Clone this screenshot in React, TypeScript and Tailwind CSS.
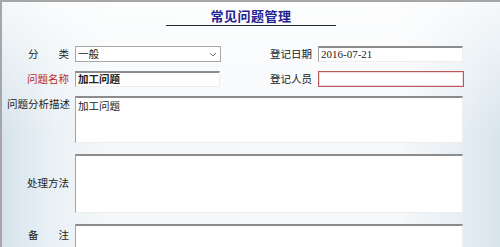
import React from "react";

const cjk = "font-['SimSun','Noto_Sans_CJK_SC',sans-serif]";
const sunken =
  "bg-white border-t-2 border-t-[#8c8c8c] border-l border-l-[#a4a4a4] border-r border-r-[#ededed] border-b border-b-[#ededed]";

function Spread({ a, b, className = "" }: { a: string; b: string; className?: string }) {
  return (
    <div className={`flex w-[41px] justify-between ${className}`}>
      <span>{a}</span>
      <span>{b}</span>
    </div>
  );
}

export default function App() {
  return (
    <div
      className={`relative h-[247px] w-[500px] overflow-hidden border-l-2 border-t-2 border-[#a6a6a6] text-[10.5px] leading-none text-[#222] ${cjk} bg-[linear-gradient(to_bottom,rgba(255,255,255,0.75),rgba(255,255,255,0)_55%),linear-gradient(to_right,#d6e3ec_0%,#e9f0f5_10%,#f5f8fa_22%,#f6f8fa_80%,#e6eef4_92%,#d8e4ec_100%)]`}
    >
      {/* title */}
      <div className="flex flex-col items-center pt-[7px]">
        <div className="text-[13px] font-bold leading-[14px] tracking-[0.5px] text-[#1f2290]">常见问题管理</div>
        <div className="mt-[2px] h-px w-[170px] bg-[#2a2a2a]" />
      </div>

      {/* rows */}
      <div className="mt-[20px] flex items-center">
        <div className="flex w-[73px] justify-end pr-[6px]">
          <Spread a="分" b="类" />
        </div>
        <div className="flex h-[16px] w-[146px] items-center justify-between border border-[#a8a8a8] bg-white pl-[2px] pr-[3px]">
          <span>一般</span>
          <svg width="8" height="5" viewBox="0 0 8 5" className="text-[#777]">
            <path d="M1 1l3 3 3-3" fill="none" stroke="currentColor" strokeWidth="1" />
          </svg>
        </div>
        <div className="ml-[49px] w-[48px]">登记日期</div>
        <div className={`flex h-[16px] w-[145px] items-center pl-[2px] ${sunken} font-['Liberation_Serif',serif] text-[11px]`}>
          2016-07-21
        </div>
      </div>

      <div className="mt-[9px] flex items-center">
        <div className="w-[73px] pr-[6px] text-right text-[#b42a2a]">问题名称</div>
        <div className={`flex h-[16px] w-[145px] items-center pl-[2px] font-bold ${sunken}`}>加工问题</div>
        <div className="ml-[50px] w-[48px]">登记人员</div>
        <div className="h-[16px] w-[146px] border border-[#b85a5a] bg-white shadow-[inset_0_0_0_1px_#f3dada]" />
      </div>

      <div className="mt-[9px] flex">
        <div className="w-[73px] pr-[5px] pt-[3px] text-right">问题分析描述</div>
        <div className={`h-[47px] w-[388px] pl-[2px] pt-[3px] ${sunken}`}>加工问题</div>
      </div>

      <div className="mt-[11px] flex items-center">
        <div className="w-[73px] pr-[6px] text-right">处理方法</div>
        <div className={`h-[59px] w-[388px] ${sunken}`} />
      </div>

      <div className="mt-[11px] flex">
        <div className="flex w-[73px] justify-end pr-[6px] pt-[6px]">
          <Spread a="备" b="注" />
        </div>
        <div className={`h-[40px] w-[388px] ${sunken}`} />
      </div>
    </div>
  );
}
